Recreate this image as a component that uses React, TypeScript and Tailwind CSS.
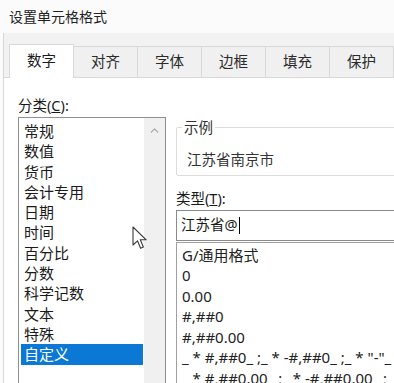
import { ChevronUp } from 'lucide-react';

const tabs = ['数字', '对齐', '字体', '边框', '填充', '保护'];

const categories = [
  '常规',
  '数值',
  '货币',
  '会计专用',
  '日期',
  '时间',
  '百分比',
  '分数',
  '科学记数',
  '文本',
  '特殊',
  '自定义',
];

const formats = [
  'G/通用格式',
  '0',
  '0.00',
  '#,##0',
  '#,##0.00',
  '_ * #,##0_ ;_ * -#,##0_ ;_ * "-"_ ;_ @_ ',
  '_ * #,##0.00_ ;_ * -#,##0.00_ ;_ * "-"??_ ;_ @_ ',
];

function Cursor() {
  return (
    <svg className="absolute left-[132px] top-[226px]" width="16" height="25" viewBox="0 0 16 25">
      <path
        d="M1 1 L1 19 L5.5 14.8 L8.6 22.2 L11.4 21 L8.3 13.8 L14.2 13.8 Z"
        fill="#ffffff"
        stroke="#3a3a3a"
        strokeWidth="1.1"
        strokeLinejoin="round"
      />
    </svg>
  );
}

export default function App() {
  return (
    <div
      className="relative w-[394px] h-[383px] overflow-hidden bg-[#fbfbfb] text-[#1a1a1a]"
      style={{ fontFamily: '"Noto Sans", "Noto Sans CJK SC", sans-serif' }}
    >
      {/* title */}
      <div className="h-[33px] flex items-center pl-[9px] text-[14px] text-[#222]">设置单元格格式</div>

      <div className="ml-[3px] border-l border-[#d6d6d6] bg-[#f2f2f2] pt-[12px]">
        {/* tabs */}
        <div className="flex items-end pl-[5px] border-b border-[#d9d9d9] h-[33px]">
          {tabs.map((t, i) =>
            i === 0 ? (
              <div
                key={t}
                className="w-[65px] h-[34px] -mb-px bg-white border border-b-0 border-[#d9d9d9] flex items-center justify-center text-[14.5px] pb-[2px]"
              >
                {t}
              </div>
            ) : (
              <div
                key={t}
                className="w-[64px] h-[31px] bg-[#f0f0f0] border-t border-r border-[#d9d9d9] flex items-center justify-center text-[14.5px] text-[#2a2a2a]"
              >
                {t}
              </div>
            )
          )}
        </div>

        {/* content */}
        <div className="bg-white h-[310px] flex pl-[14px] pt-[18px]">
          {/* left column */}
          <div className="w-[148px] shrink-0 flex flex-col">
            <div className="text-[14.5px] leading-[18px] h-[21px]">分类(<span className="underline">C</span>):</div>
            <div className="flex-1 border border-[#8e8f8f] flex">
              <div className="flex-1 pt-[3px] pl-[2px]">
                {categories.map((c) =>
                  c === '自定义' ? (
                    <div key={c} className="h-[20.3px] leading-[20px] pl-[3px] bg-[#0a78d4] text-white text-[15px]">
                      {c}
                    </div>
                  ) : (
                    <div key={c} className="h-[20.3px] leading-[20px] pl-[3px] text-[15px]">
                      {c}
                    </div>
                  )
                )}
              </div>
              <div className="w-[21px] ml-[1px] bg-[#f0f0f0] flex justify-center pt-[6px]">
                <ChevronUp className="w-[13px] h-[13px] text-[#a6a6a6]" strokeWidth={2.2} />
              </div>
            </div>
          </div>

          {/* right column */}
          <div className="ml-[10px] w-[240px] shrink-0 flex flex-col overflow-hidden">
            <div className="relative mt-[31px] h-[50px] border border-[#dcdcdc] rounded-[2px]">
              <span className="absolute -top-[11px] left-[5px] bg-white px-[2px] text-[14.5px] text-[#333]">示例</span>
              <div className="pl-[10px] pt-[21px] text-[14.5px] leading-[20px] text-[#333]">江苏省南京市</div>
            </div>
            <div className="mt-[13px] h-[21px] text-[14.5px] leading-[18px]">类型(<span className="underline">T</span>):</div>
            <div className="h-[31px] border border-[#8a8a8a] flex items-center pl-[4px] text-[14.5px]">
              江苏省@<span className="inline-block w-px h-[17px] bg-black ml-px" />
            </div>
            <div className="mt-px flex-1 border-l border-t border-[#a0a0a0] pt-[2px] pl-[5px]">
              {formats.map((f) => (
                <div key={f} className="h-[20.5px] leading-[20px] text-[15px] whitespace-pre text-[#222]">
                  {f}
                </div>
              ))}
            </div>
          </div>
        </div>
      </div>

      <Cursor />
    </div>
  );
}
